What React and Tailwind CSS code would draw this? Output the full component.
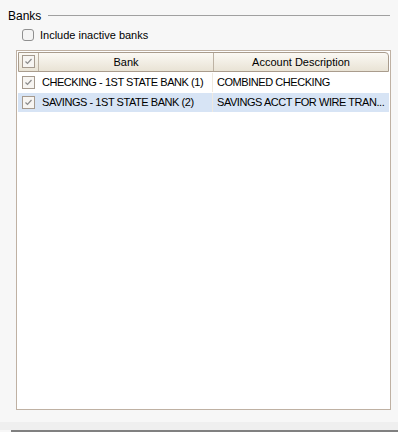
import React from 'react'

const rows = [
  { bank: 'CHECKING - 1ST STATE BANK (1)', desc: 'COMBINED CHECKING', selected: false },
  { bank: 'SAVINGS - 1ST STATE BANK (2)', desc: 'SAVINGS ACCT FOR WIRE TRAN...', selected: true },
]

const Check = () => (
  <div className="w-[13px] h-[13px] border border-[#a59a8e] bg-[#f7f5f2] flex items-center justify-center">
    <svg width="9" height="9" viewBox="0 0 9 9">
      <path d="M1.5 4.5 L3.5 6.5 L7.5 2" fill="none" stroke="#8c8c8c" strokeWidth="1.2" />
    </svg>
  </div>
)

const App = () => {
  return (
    <div className="w-[398px] h-[432px] bg-[#f7f7f7] flex flex-col text-[11px] text-black" style={{ fontFamily: '"Liberation Sans", Arial, sans-serif' }}>
      <div className="flex items-center pl-[8px] pr-[8px] pt-[8px] h-[24px]">
        <span className="text-[12px] leading-none">Banks</span>
        <div className="flex-1 h-px bg-[#a0a0a0] ml-[7px]" />
      </div>
      <label className="flex items-center gap-[6px] ml-[22px] mt-[4px] h-[14px]">
        <span className="w-[12px] h-[12px] rounded-[3px] border border-[#8f8f8f] bg-[#f4f4f4]" />
        <span className="text-[11px]">Include inactive banks</span>
      </label>
      <div className="ml-[16px] mt-[8px] w-[375px] h-[361px] border border-[#bfb1a3] bg-white pt-px pl-px">
        <div className="flex h-[20px] w-[371px] border border-[#a99c8d] rounded-tr-[4px] bg-gradient-to-b from-[#fbf9f4] to-[#e9e3d5]">
          <div className="w-[20px] flex items-center justify-center border-r border-[#bdb2a3]">
            <Check />
          </div>
          <div className="w-[175px] flex items-center justify-center border-r border-[#bdb2a3]">Bank</div>
          <div className="flex-1 flex items-center justify-center">Account Description</div>
        </div>
        {rows.map((r) => (
          <div key={r.bank} className={`flex h-[19px] w-[371px] mt-px tracking-[-0.45px] ${r.selected ? 'bg-[#d7e4f5]' : ''}`}>
            <div className="w-[20px] flex items-center justify-center">
              <Check />
            </div>
            <div className="w-[175px] flex items-center pl-[4px] border-r border-[#efe9df] whitespace-nowrap overflow-hidden">{r.bank}</div>
            <div className="flex-1 min-w-0 pl-[4px] leading-[19px] whitespace-nowrap overflow-hidden">{r.desc}</div>
          </div>
        ))}
      </div>
      <div className="mt-[12px] h-[8px] bg-[#efefef]" />
      <div className="ml-[11px] h-[2px] bg-[#808080]" />
    </div>
  )
}

export default App
